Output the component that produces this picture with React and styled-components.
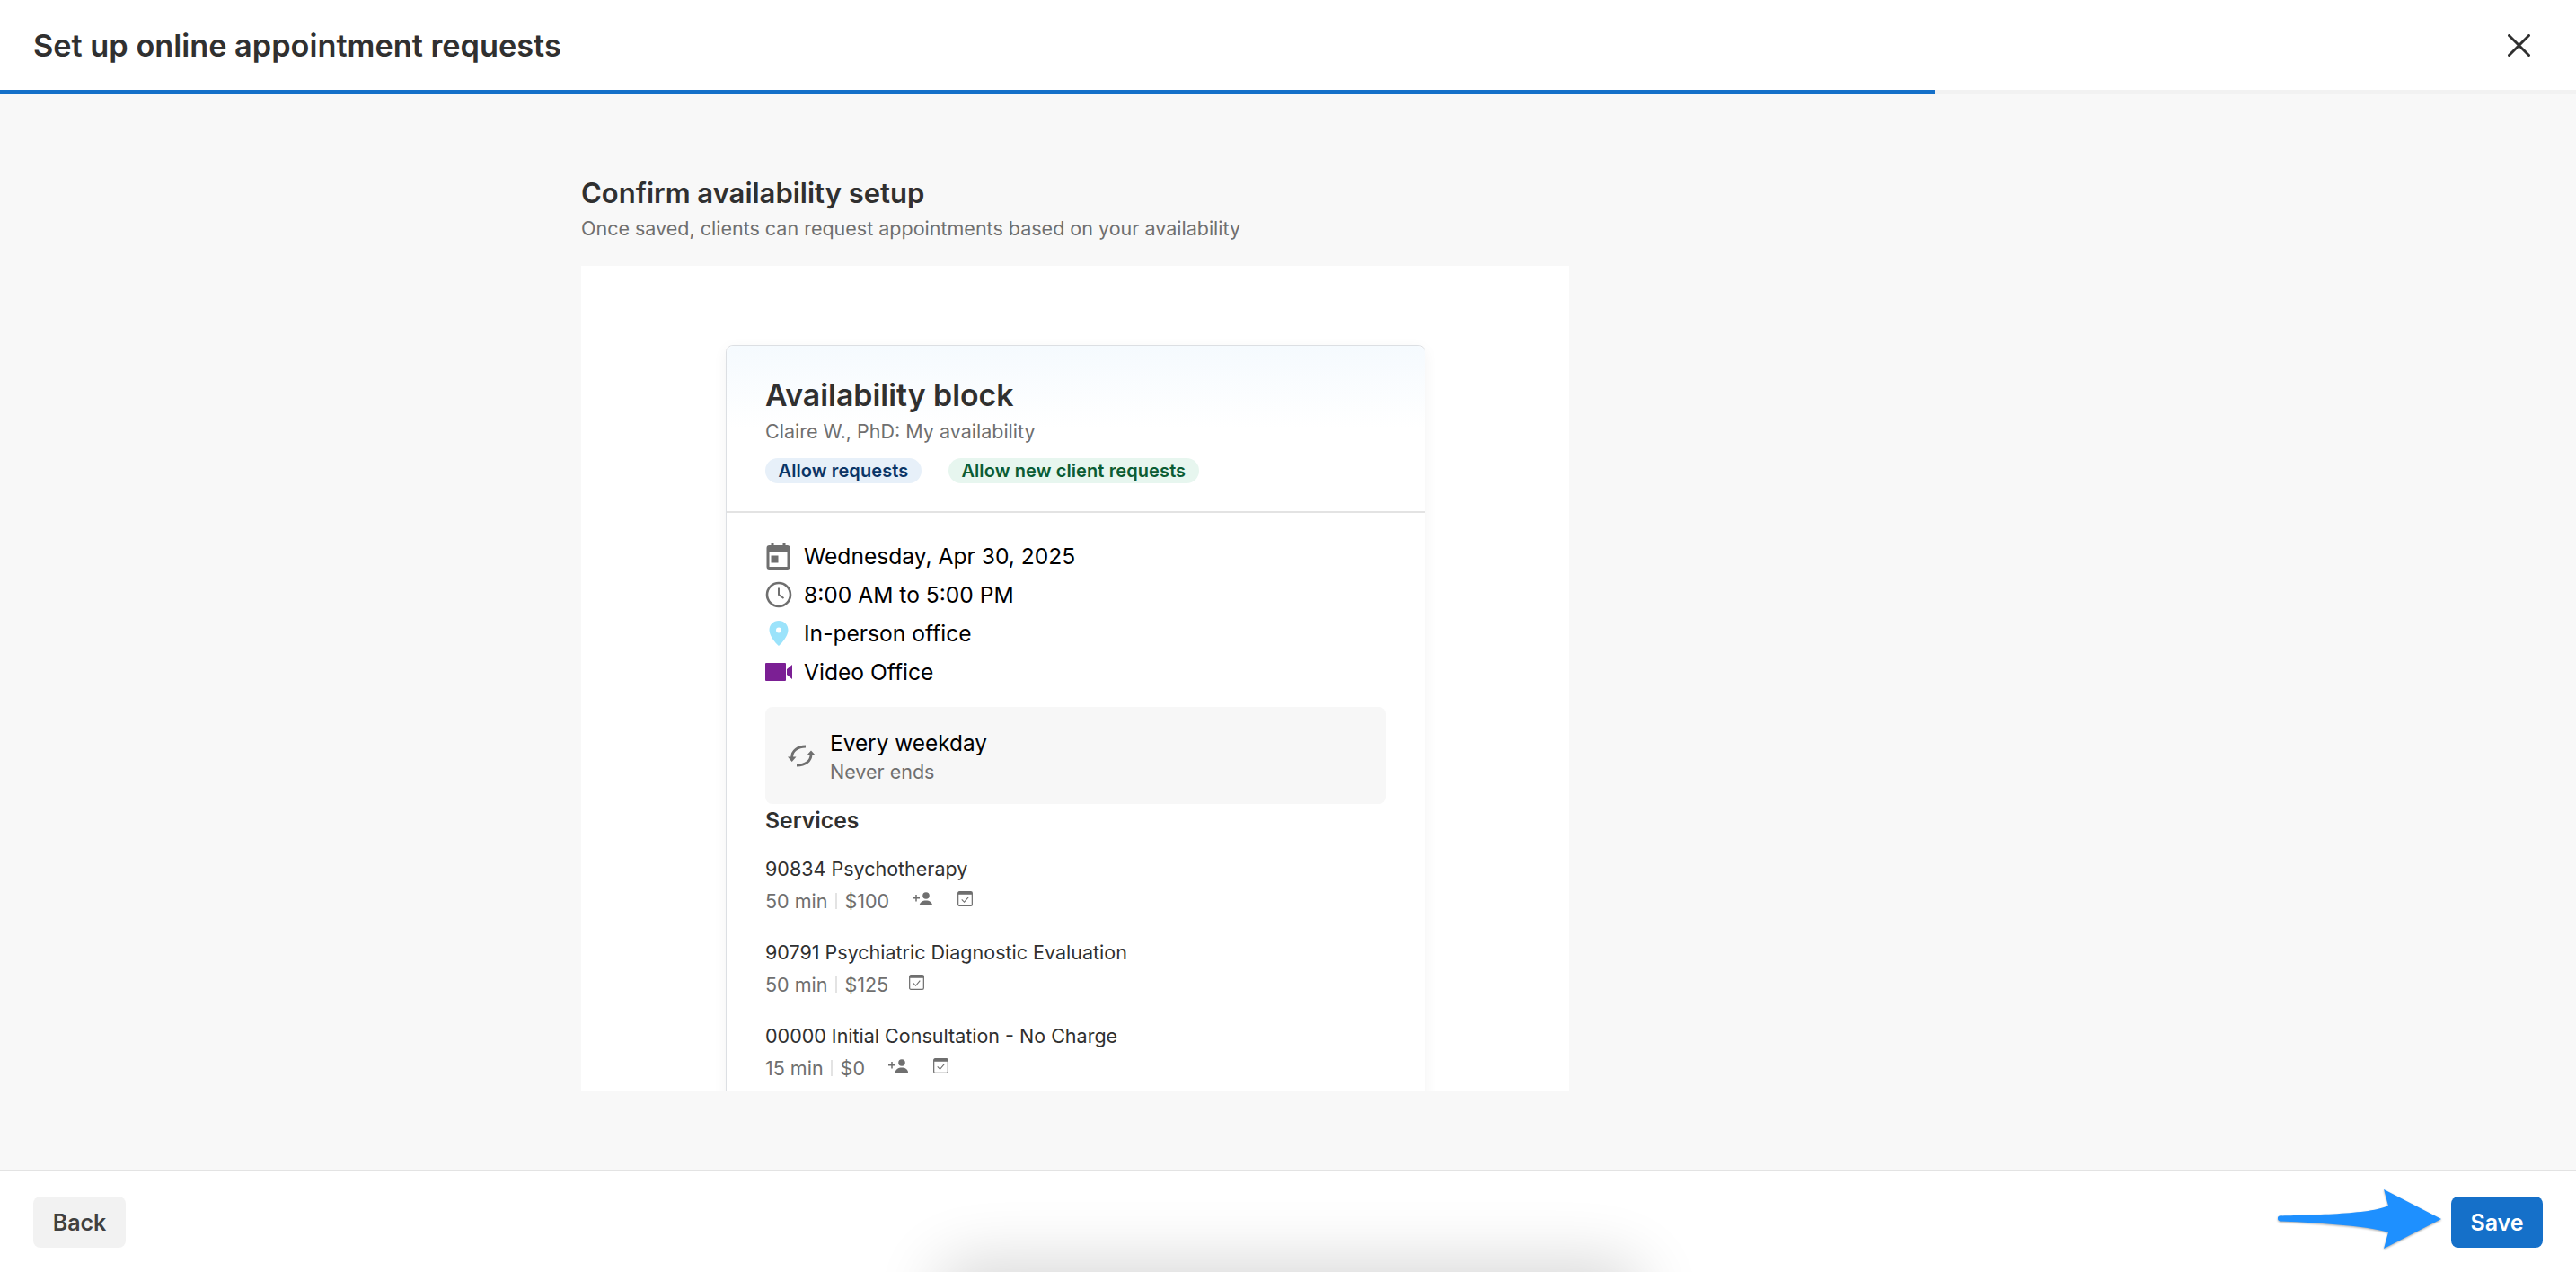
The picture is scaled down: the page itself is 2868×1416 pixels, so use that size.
import React from "react";
import styled, { createGlobalStyle } from "styled-components";

const GlobalStyle = createGlobalStyle`
  html, body {
    margin: 0;
    padding: 0;
    height: 100%;
    background: #ffffff;
    font-family: Inter, "Liberation Sans", sans-serif;
  }
  * { box-sizing: border-box; }
`;

const Page = styled.div`
  height: 1416px;
  display: flex;
  flex-direction: column;
  overflow: hidden;
`;

const Header = styled.header`
  height: 100px;
  flex: none;
  display: flex;
  align-items: center;
  justify-content: space-between;
  padding: 0 51px 0 37px;
  background: #ffffff;
`;

const Title = styled.h1`
  margin: 0;
  font-size: 34.3px;
  font-weight: 600;
  color: #303030;
`;

const CloseButton = styled.button`
  display: flex;
  padding: 0;
  border: none;
  background: none;
  cursor: pointer;
`;

const Progress = styled.div`
  height: 5px;
  flex: none;
  background: #f2f2f2;
`;

const ProgressFill = styled.div`
  height: 100%;
  width: 2154px;
  background: #1570c9;
`;

const Main = styled.main`
  flex: 1;
  min-height: 0;
  padding: 90px 0 0 647px;
  background: #f8f8f8;
`;

const Heading = styled.h2`
  margin: 0;
  font-size: 31px;
  line-height: 40px;
  font-weight: 600;
  color: #303030;
`;

const Subheading = styled.p`
  margin: 0 0 23px;
  font-size: 21.5px;
  line-height: 38px;
  color: #6f6f6f;
`;

const Panel = styled.section`
  width: 1100px;
  height: 919px;
  padding: 88px 0 0 161px;
  background: #ffffff;
  overflow: hidden;
`;

const Card = styled.article`
  width: 779px;
  min-height: 1000px;
  border: 1px solid #dcdfe3;
  border-radius: 8px;
  background: #ffffff;
  box-shadow: 0 4px 16px rgba(0, 0, 0, 0.05);
`;

const CardTop = styled.div`
  height: 186px;
  padding: 34px 43px 0;
  border-bottom: 2px solid #e3e3e3;
  border-radius: 8px 8px 0 0;
  background: linear-gradient(#f5fafe, #ffffff 50%);
`;

const CardTitle = styled.h3`
  margin: 0;
  font-size: 33.8px;
  line-height: 42px;
  font-weight: 600;
  color: #303030;
`;

const CardSub = styled.div`
  margin-top: 3px;
  font-size: 21.5px;
  line-height: 32px;
  color: #6f6f6f;
`;

const Badges = styled.div`
  display: flex;
  gap: 30px;
  margin-top: 14px;
`;

const Badge = styled.span`
  display: flex;
  align-items: center;
  height: 28px;
  padding: 0 14.5px;
  border-radius: 14px;
  font-size: 20px;
  letter-spacing: 0.1px;
  font-weight: 600;
  background: ${(p) => (p.$tone === "green" ? "#e7f6ef" : "#e7f0f9")};
  color: ${(p) => (p.$tone === "green" ? "#0b5c33" : "#0b3566")};
`;

const CardBody = styled.div`
  padding: 26px 43px 0;
`;

const InfoRow = styled.div`
  display: flex;
  align-items: center;
  height: 43px;
  font-size: 24.6px;
  color: #000000;
`;

const InfoIcon = styled.span`
  display: flex;
  justify-content: center;
  width: 30px;
  margin-right: 13px;
`;

const Recurrence = styled.div`
  display: flex;
  align-items: center;
  height: 108px;
  margin-top: 18px;
  padding-left: 25px;
  border-radius: 8px;
  background: #f7f7f7;
`;

const RecurrenceText = styled.div`
  margin-left: 16px;
  padding-top: 4px;
`;

const RecurrenceTitle = styled.div`
  font-size: 24.4px;
  line-height: 32px;
  color: #000000;
`;

const RecurrenceSub = styled.div`
  font-size: 21.5px;
  line-height: 32px;
  color: #6f6f6f;
`;

const ServicesTitle = styled.h4`
  margin: 0;
  font-size: 24.7px;
  line-height: 36px;
  font-weight: 600;
  color: #303030;
`;

const Service = styled.div`
  height: 93px;
  padding-top: 18px;
`;

const ServiceName = styled.div`
  font-size: 21.5px;
  line-height: 36px;
  color: #303030;
`;

const ServiceMeta = styled.div`
  display: flex;
  align-items: center;
  font-size: 21.5px;
  line-height: 36px;
  color: #6f6f6f;
`;

const Divider = styled.span`
  width: 2px;
  height: 18px;
  margin: 0 8.5px;
  background: #e3e3e3;
`;

const MetaIcon = styled.span`
  display: flex;
  margin: -6px 0 0 ${(p) => p.$gap}px;
`;

const Footer = styled.footer`
  position: relative;
  height: 114px;
  flex: none;
  display: flex;
  align-items: flex-start;
  justify-content: space-between;
  padding: 28px 37px 0;
  border-top: 2px solid #e3e3e3;
  background: #ffffff;
  overflow: hidden;
`;

const BottomShadow = styled.div`
  position: absolute;
  left: 1060px;
  top: 120px;
  width: 750px;
  height: 40px;
  border-radius: 30px;
  box-shadow: 0 0 70px 20px rgba(0, 0, 0, 0.16);
`;

const Button = styled.button`
  height: 57px;
  padding: 0;
  border: none;
  border-radius: 8px;
  font-family: inherit;
  font-size: 25px;
  font-weight: 600;
  cursor: pointer;
`;

const BackButton = styled(Button)`
  width: 103px;
  background: #f2f2f2;
  color: #404040;
`;

const SaveButton = styled(Button)`
  width: 102px;
  background: #1570c9;
  color: #ffffff;
`;

const SaveGroup = styled.div`
  position: relative;
  display: flex;
`;

const Arrow = styled.svg`
  position: absolute;
  left: -193px;
  top: -9px;
  filter: drop-shadow(0 1px 1px rgba(0, 0, 0, 0.35));
`;

const CalendarIcon = () => (
  <svg width="30" height="30" viewBox="0 0 30 30">
    <path fill="#6f6f6f" d="M6.500 0h3v3h10V0h3v3h2a3 3 0 0 1 3 3v21a3 3 0 0 1-3 3h-20a3 3 0 0 1-3-3V6a3 3 0 0 1 3-3h2z" />
    <rect x="4.500" y="10.500" width="20" height="16.500" fill="#fff" />
    <rect x="6.500" y="14.500" width="8" height="8" fill="#6f6f6f" />
  </svg>
);

const ClockIcon = () => (
  <svg width="30" height="30" viewBox="0 0 30 30" fill="none" stroke="#6f6f6f">
    <circle cx="15" cy="15" r="13" strokeWidth="2.6" />
    <path d="M15 7.5V15l5.5 4" strokeWidth="2" />
  </svg>
);

const PinIcon = () => (
  <svg width="22" height="30" viewBox="0 0 22 30">
    <path fill="#9be3fb" fillRule="evenodd" d="M11 1C5 1 .5 5.6.5 11.300C.5 18 7 25.500 11 29c4-3.500 10.500-11 10.500-17.700C21.500 5.600 17 1 11 1zm0 7.500a3 3 0 1 1 0 6 3 3 0 0 1 0-6z" />
  </svg>
);

const VideoIcon = () => (
  <svg width="30" height="22" viewBox="0 0 30 22">
    <path fill="#7b1f94" d="M1 1h21a1 1 0 0 1 1 1v18a1 1 0 0 1-1 1H1a1 1 0 0 1-1-1V2a1 1 0 0 1 1-1zm23 7l6-5v16l-6-5z" />
  </svg>
);

const RepeatIcon = () => (
  <svg width="31" height="25" viewBox="0 0 31 25" fill="none" stroke="#6f6f6f" strokeWidth="2.8">
    <path d="M4.700 14C4.700 7 11 2 20 2" />
    <path d="M26 11c0 7-6 12-16 12" />
    <path fill="#6f6f6f" stroke="none" d="M0 13.500h9.500L4.700 19zM21 12h10l-5-5.500z" />
  </svg>
);

const PersonAddIcon = () => (
  <svg width="22" height="15" viewBox="0 0 22 15">
    <circle cx="15" cy="4" r="3.800" fill="#6f6f6f" />
    <path fill="#6f6f6f" d="M7.700 15c0-3.500 3.500-5.500 7.300-5.500S22 11.500 22 15z" />
    <path stroke="#6f6f6f" strokeWidth="1.500" d="M0 6.700h8M4 3v7.500" />
  </svg>
);

const CalendarCheckIcon = () => (
  <svg width="17" height="17" viewBox="0 0 18 18" fill="none">
    <rect x=".7" y=".7" width="16.600" height="16.600" rx="1.500" stroke="#6f6f6f" strokeWidth="1.300" />
    <path fill="#6f6f6f" d="M1 1h16v3H1z" />
    <path stroke="#6f6f6f" strokeWidth="1.200" d="M5 10l3 3 5-6" />
  </svg>
);

const info = [
  { icon: <CalendarIcon />, text: "Wednesday, Apr 30, 2025" },
  { icon: <ClockIcon />, text: "8:00 AM to 5:00 PM" },
  { icon: <PinIcon />, text: "In-person office" },
  { icon: <VideoIcon />, text: "Video Office" },
];

const services = [
  { name: "90834 Psychotherapy", time: "50 min", price: "$100", newClients: true },
  { name: "90791 Psychiatric Diagnostic Evaluation", time: "50 min", price: "$125", newClients: false },
  { name: "00000 Initial Consultation - No Charge", time: "15 min", price: "$0", newClients: true },
];

const App = () => {
  return (
    <Page>
      <GlobalStyle />
      <Header>
        <Title>Set up online appointment requests</Title>
        <CloseButton aria-label="Close">
          <svg width="25" height="25" viewBox="0 0 25 25" stroke="#303030" strokeWidth="3" strokeLinecap="round">
            <path d="M1.500 1.500l22 22M23.500 1.500l-22 22" />
          </svg>
        </CloseButton>
      </Header>
      <Progress>
        <ProgressFill />
      </Progress>

      <Main>
        <Heading>Confirm availability setup</Heading>
        <Subheading>Once saved, clients can request appointments based on your availability</Subheading>
        <Panel>
          <Card>
            <CardTop>
              <CardTitle>Availability block</CardTitle>
              <CardSub>Claire W., PhD: My availability</CardSub>
              <Badges>
                <Badge>Allow requests</Badge>
                <Badge $tone="green">Allow new client requests</Badge>
              </Badges>
            </CardTop>
            <CardBody>
              {info.map((row) => (
                <InfoRow key={row.text}>
                  <InfoIcon>{row.icon}</InfoIcon>
                  {row.text}
                </InfoRow>
              ))}
              <Recurrence>
                <RepeatIcon />
                <RecurrenceText>
                  <RecurrenceTitle>Every weekday</RecurrenceTitle>
                  <RecurrenceSub>Never ends</RecurrenceSub>
                </RecurrenceText>
              </Recurrence>
              <ServicesTitle>Services</ServicesTitle>
              {services.map((s) => (
                <Service key={s.name}>
                  <ServiceName>{s.name}</ServiceName>
                  <ServiceMeta>
                    {s.time}
                    <Divider />
                    {s.price}
                    {s.newClients && (
                      <MetaIcon $gap={26}>
                        <PersonAddIcon />
                      </MetaIcon>
                    )}
                    <MetaIcon $gap={s.newClients ? 28 : 23}>
                      <CalendarCheckIcon />
                    </MetaIcon>
                  </ServiceMeta>
                </Service>
              ))}
            </CardBody>
          </Card>
        </Panel>
      </Main>

      <Footer>
        <BottomShadow />
        <BackButton>Back</BackButton>
        <SaveGroup>
          <Arrow width="184" height="68" viewBox="0 0 184 68">
            <path fill="#1e90ff" d="M2 30.500C30 29.500 105 29 123 19L118 1l64 33-64 33 5-18C100 41 30 37.500 3 36.500c-4-.5-4-5.500-1-6z" />
          </Arrow>
          <SaveButton>Save</SaveButton>
        </SaveGroup>
      </Footer>
    </Page>
  );
};

export default App;
